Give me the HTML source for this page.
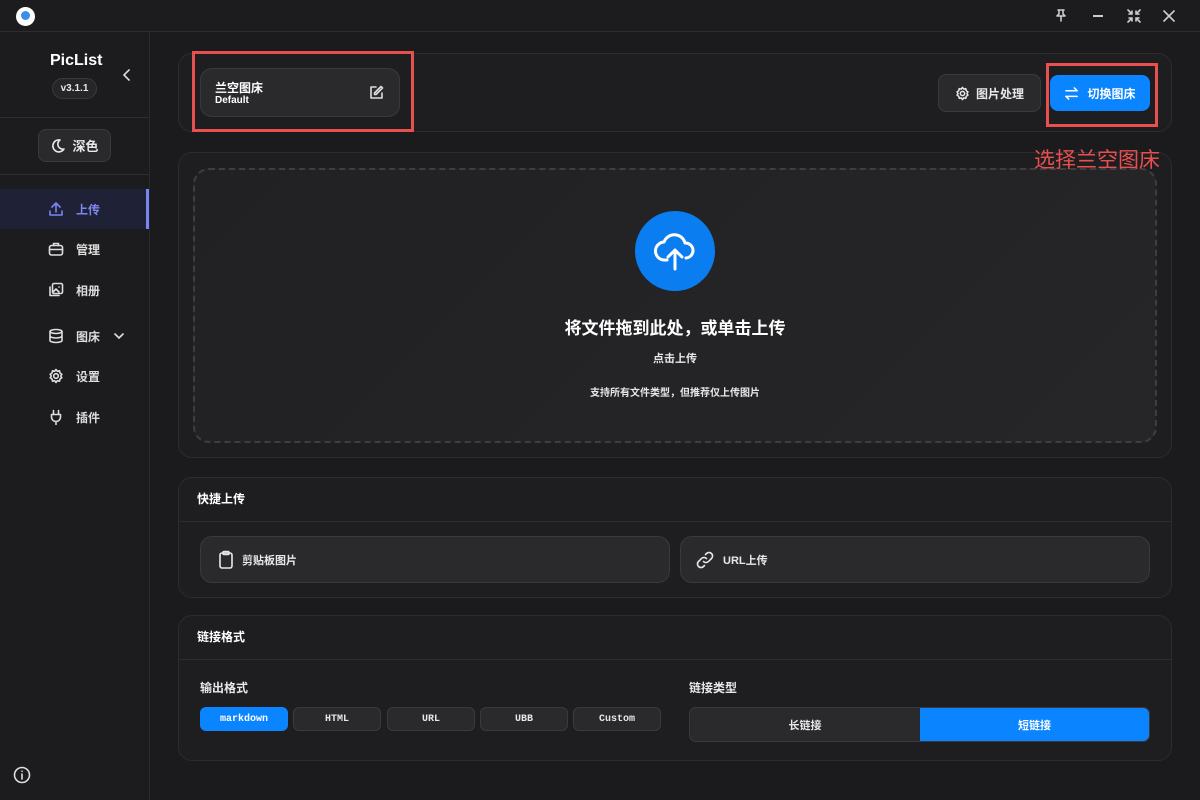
<!DOCTYPE html>
<html><head><meta charset="utf-8"><style>
*{box-sizing:border-box;margin:0;padding:0}
body{width:1200px;height:800px;background:#1b1b1d;font-family:"Liberation Sans","Noto Sans CJK SC",sans-serif;color:#e8e8e8;position:relative;overflow:hidden;font-weight:bold}
.abs{position:absolute}
.title{left:0;top:0;width:1200px;height:32px;background:#1c1c1e;border-bottom:1px solid #2e2e31}
.side{left:0;top:32px;width:150px;height:768px;background:#1c1c1e;border-right:1px solid #2a2a2d}
.card{background:#1e1e20;border:1px solid #2c2c2f;border-radius:14px}
.btn{background:#2a2a2d;border:1px solid #3a3a3e;border-radius:8px}
svg{fill:none;stroke:currentColor;stroke-width:1.6;stroke-linecap:round;stroke-linejoin:round}
.nav{left:0;width:150px;height:40px;display:flex;align-items:center;padding-left:48px;font-size:12px;color:#ddd}
.nav span{margin-left:12px}
.fmt{top:707px;height:24px;font-family:"Liberation Mono",monospace;font-size:10px;display:flex;align-items:center;justify-content:center;background:#2a2a2d;border:1px solid #3a3a3e;border-radius:6px;width:88px}
</style></head><body>
<div class="abs title"></div>
<div class="abs" style="left:16px;top:7px;width:19px;height:19px;border-radius:50%;background:#fff"></div>
<div class="abs" style="left:21px;top:11px;width:9px;height:9px;border-radius:50%;background:#3a8ef0"></div>
<svg class="abs" style="left:1054px;top:8px;color:#ccc" width="14" height="14" viewBox="0 0 14 14"><path d="M4 2h6M5 2v4l-2 2h8l-2-2V2M7 8v5"/></svg>
<div class="abs" style="left:1093px;top:15px;width:10px;height:1.5px;background:#ccc"></div>
<svg class="abs" style="left:1127px;top:9px;color:#ccc" width="14" height="14" viewBox="0 0 14 14"><path d="M1 1l4 4M5 2v3H2M13 1l-4 4M9 2v3h3M1 13l4-4M5 12V9H2M13 13l-4-4M9 12V9h3"/></svg>
<svg class="abs" style="left:1163px;top:10px;color:#ccc" width="12" height="12" viewBox="0 0 12 12"><path d="M1 1l10 10M11 1L1 11"/></svg>

<div class="abs side"></div>
<div class="abs" style="left:50px;top:52px;font-size:16px;color:#fff">PicList</div>
<div class="abs" style="left:52px;top:78px;width:45px;height:21px;border-radius:11px;background:#262628;border:1px solid #3a3a3e;font-size:10px;display:flex;align-items:center;justify-content:center">v3.1.1</div>
<svg class="abs" style="left:121px;top:68px;color:#ddd" width="12" height="14" viewBox="0 0 12 14"><path d="M8 2L3 7l5 5"/></svg>
<div class="abs" style="left:0;top:117px;width:149px;height:1px;background:#2e2e31"></div>
<div class="abs btn" style="left:38px;top:129px;width:73px;height:33px;display:flex;align-items:center;justify-content:center;font-size:13px"><svg width="16" height="16" viewBox="0 0 16 16" style="margin-right:6px"><path d="M10 2a6 6 0 1 0 4 9A5 5 0 0 1 10 2z"/></svg>深色</div>
<div class="abs" style="left:0;top:174px;width:149px;height:1px;background:#2e2e31"></div>
<div class="abs nav" style="top:189px;background:#1f2236;color:#7b86f0"><svg width="16" height="16" viewBox="0 0 16 16"><path d="M8 11V2M4 6l4-4 4 4M2 10v4h12v-4"/></svg><span>上传</span></div>
<div class="abs" style="left:146px;top:189px;width:3px;height:40px;background:#7b86f0"></div>
<div class="abs nav" style="top:229px"><svg width="16" height="16" viewBox="0 0 16 16"><rect x="1.5" y="4.5" width="13" height="9.5" rx="2"/><path d="M5.5 4.5V2.5h5v2M1.5 8.5h13"/></svg><span>管理</span></div>
<div class="abs nav" style="top:270px"><svg width="16" height="16" viewBox="0 0 16 16"><rect x="4.5" y="1.5" width="10" height="10" rx="1.5"/><path d="M2 5v8.5h9M5 10l3-3 3 3M11 5h.1"/></svg><span>相册</span></div>
<div class="abs nav" style="top:316px"><svg width="16" height="16" viewBox="0 0 16 16"><ellipse cx="8" cy="3.5" rx="6" ry="2"/><path d="M2 3.5v9c0 1.1 2.7 2 6 2s6-.9 6-2v-9M2 8c0 1.1 2.7 2 6 2s6-.9 6-2"/></svg><span>图床</span><svg style="margin-left:14px" width="10" height="10" viewBox="0 0 10 10"><path d="M1 3l4 4 4-4"/></svg></div>
<div class="abs nav" style="top:356px"><svg width="16" height="16" viewBox="0 0 16 16"><circle cx="8" cy="8" r="2.3"/><path d="M8 1.5l1.3 1.8 2.2-.5.5 2.2 1.8 1.3-1.1 1.7 1.1 1.7-1.8 1.3-.5 2.2-2.2-.5L8 14.5l-1.3-1.8-2.2.5-.5-2.2-1.8-1.3L3.3 8 2.2 6.3 4 5l.5-2.2 2.2.5z"/></svg><span>设置</span></div>
<div class="abs nav" style="top:397px"><svg width="16" height="16" viewBox="0 0 16 16"><path d="M5.5 1.5v4M10.5 1.5v4M3.5 5.5h9V8a4.5 4.5 0 0 1-9 0zM8 12.5v3"/></svg><span>插件</span></div>
<svg class="abs" style="left:13px;top:766px;color:#ddd" width="18" height="18" viewBox="0 0 18 18"><circle cx="9" cy="9" r="7.5"/><path d="M9 8v5M9 5.3h.1"/></svg>

<!-- top card -->
<div class="abs card" style="left:178px;top:53px;width:994px;height:79px"></div>
<div class="abs btn" style="left:200px;top:68px;width:200px;height:49px;border-radius:12px"></div>
<div class="abs" style="left:215px;top:79px;font-size:12px;color:#fff">兰空图床</div>
<div class="abs" style="left:215px;top:95px;font-size:10px;color:#fff">Default</div>
<svg class="abs" style="left:369px;top:85px;color:#ddd" width="15" height="15" viewBox="0 0 15 15"><path d="M7 2H2v11h11V8M12 1.5l1.5 1.5L7 9.5H5.5V8z"/></svg>
<div class="abs" style="left:192px;top:51px;width:222px;height:81px;border:3px solid #e85050"></div>
<div class="abs btn" style="left:938px;top:74px;width:103px;height:38px;display:flex;align-items:center;justify-content:center;font-size:12px"><svg width="15" height="15" viewBox="0 0 16 16" style="margin-right:6px"><circle cx="8" cy="8" r="2.3"/><path d="M8 1.5l1.3 1.8 2.2-.5.5 2.2 1.8 1.3-1.1 1.7 1.1 1.7-1.8 1.3-.5 2.2-2.2-.5L8 14.5l-1.3-1.8-2.2.5-.5-2.2-1.8-1.3L3.3 8 2.2 6.3 4 5l.5-2.2 2.2.5z"/></svg>图片处理</div>
<div class="abs" style="left:1050px;top:75px;width:100px;height:36px;border-radius:8px;background:#0a84ff;display:flex;align-items:center;justify-content:center;font-size:12px;color:#fff"><svg width="15" height="15" viewBox="0 0 16 16" style="margin-right:8px"><path d="M2 5h12M11 2l3 3M14 11H2M5 14l-3-3"/></svg>切换图床</div>
<div class="abs" style="left:1046px;top:63px;width:112px;height:64px;border:3px solid #e85050"></div>

<!-- upload card -->
<div class="abs card" style="left:178px;top:152px;width:994px;height:306px"></div>
<div class="abs" style="left:193px;top:168px;width:964px;height:275px;border:2px dashed #3e3e42;border-radius:16px;background:linear-gradient(135deg,#212123,#262628)"></div>
<div class="abs" style="left:635px;top:211px;width:80px;height:80px;border-radius:50%;background:#0a7ef0"></div>
<svg class="abs" style="left:651px;top:227px;color:#fff;stroke-width:3" width="48" height="48" viewBox="0 0 48 48"><path d="M16 33h-2a9 9 0 0 1-1-18 11 11 0 0 1 21 1 7.5 7.5 0 0 1 1 15M24 42V24M17 30l7-7 7 7"/></svg>
<div class="abs" style="left:0;width:1350px;top:314px;text-align:center;font-size:17px;color:#fff">将文件拖到此处，或单击上传</div>
<div class="abs" style="left:0;width:1350px;top:350px;text-align:center;font-size:11px">点击上传</div>
<div class="abs" style="left:0;width:1350px;top:384px;text-align:center;font-size:10px">支持所有文件类型，但推荐仅上传图片</div>

<!-- quick upload -->
<div class="abs card" style="left:178px;top:477px;width:994px;height:121px"></div>
<div class="abs" style="left:197px;top:490px;font-size:12px;color:#fff">快捷上传</div>
<div class="abs" style="left:179px;top:521px;width:992px;height:1px;background:#2c2c2f"></div>
<div class="abs btn" style="left:200px;top:536px;width:470px;height:47px;border-radius:12px;display:flex;align-items:center;padding-left:17px;font-size:11px"><svg width="16" height="20" viewBox="0 0 16 20" style="margin-right:8px"><rect x="2" y="3" width="12" height="15" rx="2"/><rect x="5" y="1.5" width="6" height="3" rx="1"/></svg>剪贴板图片</div>
<div class="abs btn" style="left:680px;top:536px;width:470px;height:47px;border-radius:12px;display:flex;align-items:center;padding-left:14px;font-size:11px"><svg width="20" height="20" viewBox="0 0 20 20" style="margin-right:8px"><path d="M8.5 11.5a3.5 3.5 0 0 0 5 0l3-3a3.5 3.5 0 0 0-5-5l-1 1M11.5 8.5a3.5 3.5 0 0 0-5 0l-3 3a3.5 3.5 0 0 0 5 5l1-1"/></svg>URL上传</div>

<!-- link format -->
<div class="abs card" style="left:178px;top:615px;width:994px;height:146px"></div>
<div class="abs" style="left:197px;top:628px;font-size:12px;color:#fff">链接格式</div>
<div class="abs" style="left:179px;top:659px;width:992px;height:1px;background:#2c2c2f"></div>
<div class="abs" style="left:200px;top:679px;font-size:12px">输出格式</div>
<div class="abs fmt" style="left:200px;background:#0a84ff;border-color:#0a84ff;color:#fff">markdown</div>
<div class="abs fmt" style="left:293px">HTML</div>
<div class="abs fmt" style="left:387px">URL</div>
<div class="abs fmt" style="left:480px">UBB</div>
<div class="abs fmt" style="left:573px">Custom</div>
<div class="abs" style="left:689px;top:679px;font-size:12px">链接类型</div>
<div class="abs" style="left:689px;top:707px;width:461px;height:35px;border:1px solid #3a3a3e;border-radius:7px;background:#2a2a2d;overflow:hidden;display:flex;font-size:11px">
<div style="width:230px;display:flex;align-items:center;justify-content:center">长链接</div>
<div style="flex:1;background:#0a84ff;color:#fff;display:flex;align-items:center;justify-content:center">短链接</div></div>

<div class="abs" style="left:1034px;top:144px;font-size:21px;color:#e85050;font-weight:normal;z-index:5">选择兰空图床</div>
</body></html>
